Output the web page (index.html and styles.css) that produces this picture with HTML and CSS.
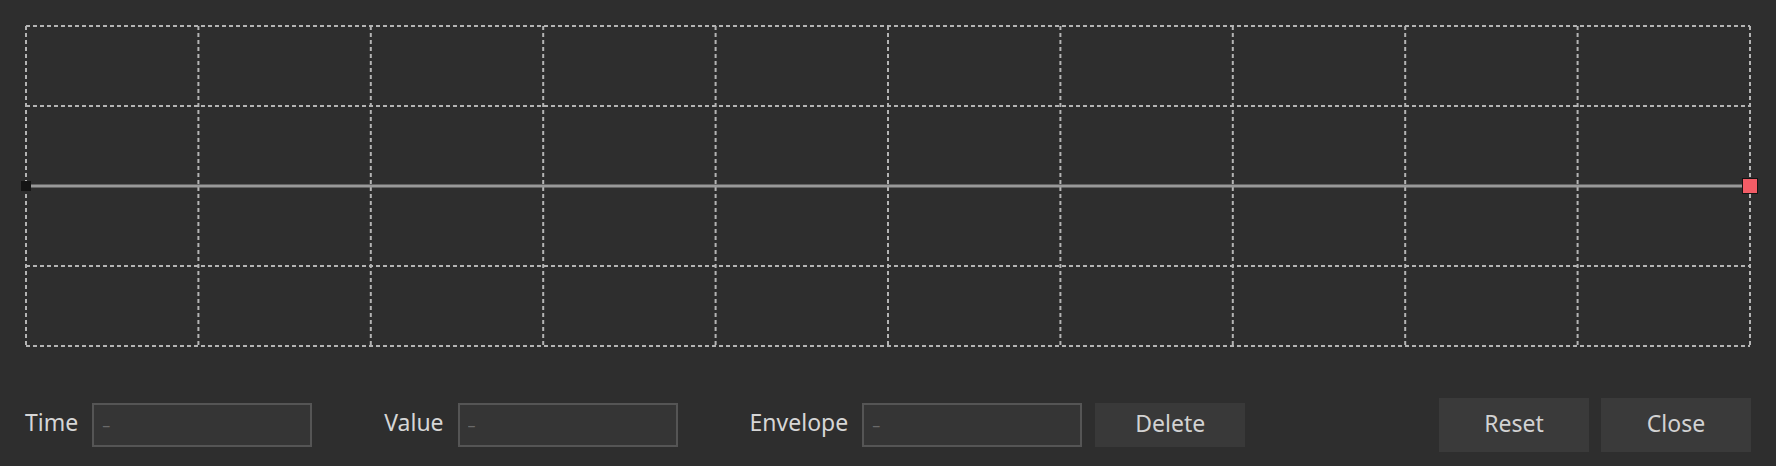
FILE: index.html
```html
<!DOCTYPE html>
<html>
<head>
<meta charset="utf-8">
<link rel="stylesheet" href="styles.css">
</head>
<body>
<div class="editor">
  <svg class="graph" width="1776" height="372" viewBox="0 0 1776 372">
    <g class="grid">
      <line x1="26" y1="26" x2="1750" y2="26"/>
      <line x1="26" y1="106" x2="1750" y2="106"/>
      <line x1="26" y1="186" x2="1750" y2="186"/>
      <line x1="26" y1="266" x2="1750" y2="266"/>
      <line x1="26" y1="346" x2="1750" y2="346"/>
      <line x1="26" y1="26" x2="26" y2="346"/>
      <line x1="198.4" y1="26" x2="198.4" y2="346"/>
      <line x1="370.8" y1="26" x2="370.8" y2="346"/>
      <line x1="543.2" y1="26" x2="543.2" y2="346"/>
      <line x1="715.6" y1="26" x2="715.6" y2="346"/>
      <line x1="888" y1="26" x2="888" y2="346"/>
      <line x1="1060.4" y1="26" x2="1060.4" y2="346"/>
      <line x1="1232.8" y1="26" x2="1232.8" y2="346"/>
      <line x1="1405.2" y1="26" x2="1405.2" y2="346"/>
      <line x1="1577.6" y1="26" x2="1577.6" y2="346"/>
      <line x1="1750" y1="26" x2="1750" y2="346"/>
    </g>
    <line class="curve" x1="30" y1="186" x2="1744" y2="186"/>
    <rect class="pt-start" x="21" y="181" width="10" height="10"/>
    <rect class="pt-end" x="1742.5" y="178.5" width="15" height="15"/>
  </svg>
  <div class="controls">
    <label class="field first"><span class="lbl">Time</span><input class="inp" placeholder="–"></label>
    <label class="field"><span class="lbl">Value</span><input class="inp" placeholder="–"></label>
    <label class="field"><span class="lbl">Envelope</span><input class="inp" placeholder="–"></label>
    <button class="btn btn-delete">Delete</button>
    <div class="spacer"></div>
    <button class="btn btn-big">Reset</button>
    <button class="btn btn-big">Close</button>
  </div>
</div>
</body>
</html>
```

FILE: styles.css
```css
html, body {
  margin: 0;
  padding: 0;
  background: #2e2e2e;
  width: 1776px;
  height: 466px;
  overflow: hidden;
}
.editor {
  font-family: "Noto Sans", "Open Sans", sans-serif;
  color: #d6d6d6;
}
.graph {
  display: block;
}
.grid line {
  stroke: #b4b4b4;
  stroke-width: 2;
  stroke-dasharray: 4 3;
}
.curve {
  stroke: #999999;
  stroke-width: 3;
}
.pt-start {
  fill: #141414;
}
.pt-end {
  fill: #f25c66;
  stroke: #141414;
  stroke-width: 1;
}
.controls {
  display: flex;
  align-items: center;
  height: 54px;
  margin-top: 26px;
  padding: 0 25px;
}
.field {
  display: flex;
  align-items: center;
  gap: 14px;
  margin-left: 72px;
}
.field.first {
  margin-left: 0;
}
.lbl {
  font-size: 23px;
  line-height: 30px;
  padding-bottom: 6px;
  color: #d6d6d6;
}
.inp {
  box-sizing: border-box;
  width: 220px;
  height: 44px;
  background: #353535;
  border: 2px solid #555555;
  outline: none;
  padding: 0 8px;
  font-family: "Noto Sans", sans-serif;
  font-size: 16px;
  color: #d6d6d6;
}
.inp::placeholder {
  color: #6a6a6a;
}
.btn {
  box-sizing: border-box;
  border: none;
  font-family: "Noto Sans", "Open Sans", sans-serif;
  font-size: 23px;
  line-height: 30px;
  color: #d2d2d2;
  background: #3a3a3a;
  padding: 0 0 4px 0;
}
.btn-delete {
  width: 150px;
  height: 44px;
  margin-left: 13px;
  background: #393939;
}
.spacer {
  flex: 1;
}
.btn-big {
  width: 150px;
  height: 54px;
  margin-left: 12px;
}
```
